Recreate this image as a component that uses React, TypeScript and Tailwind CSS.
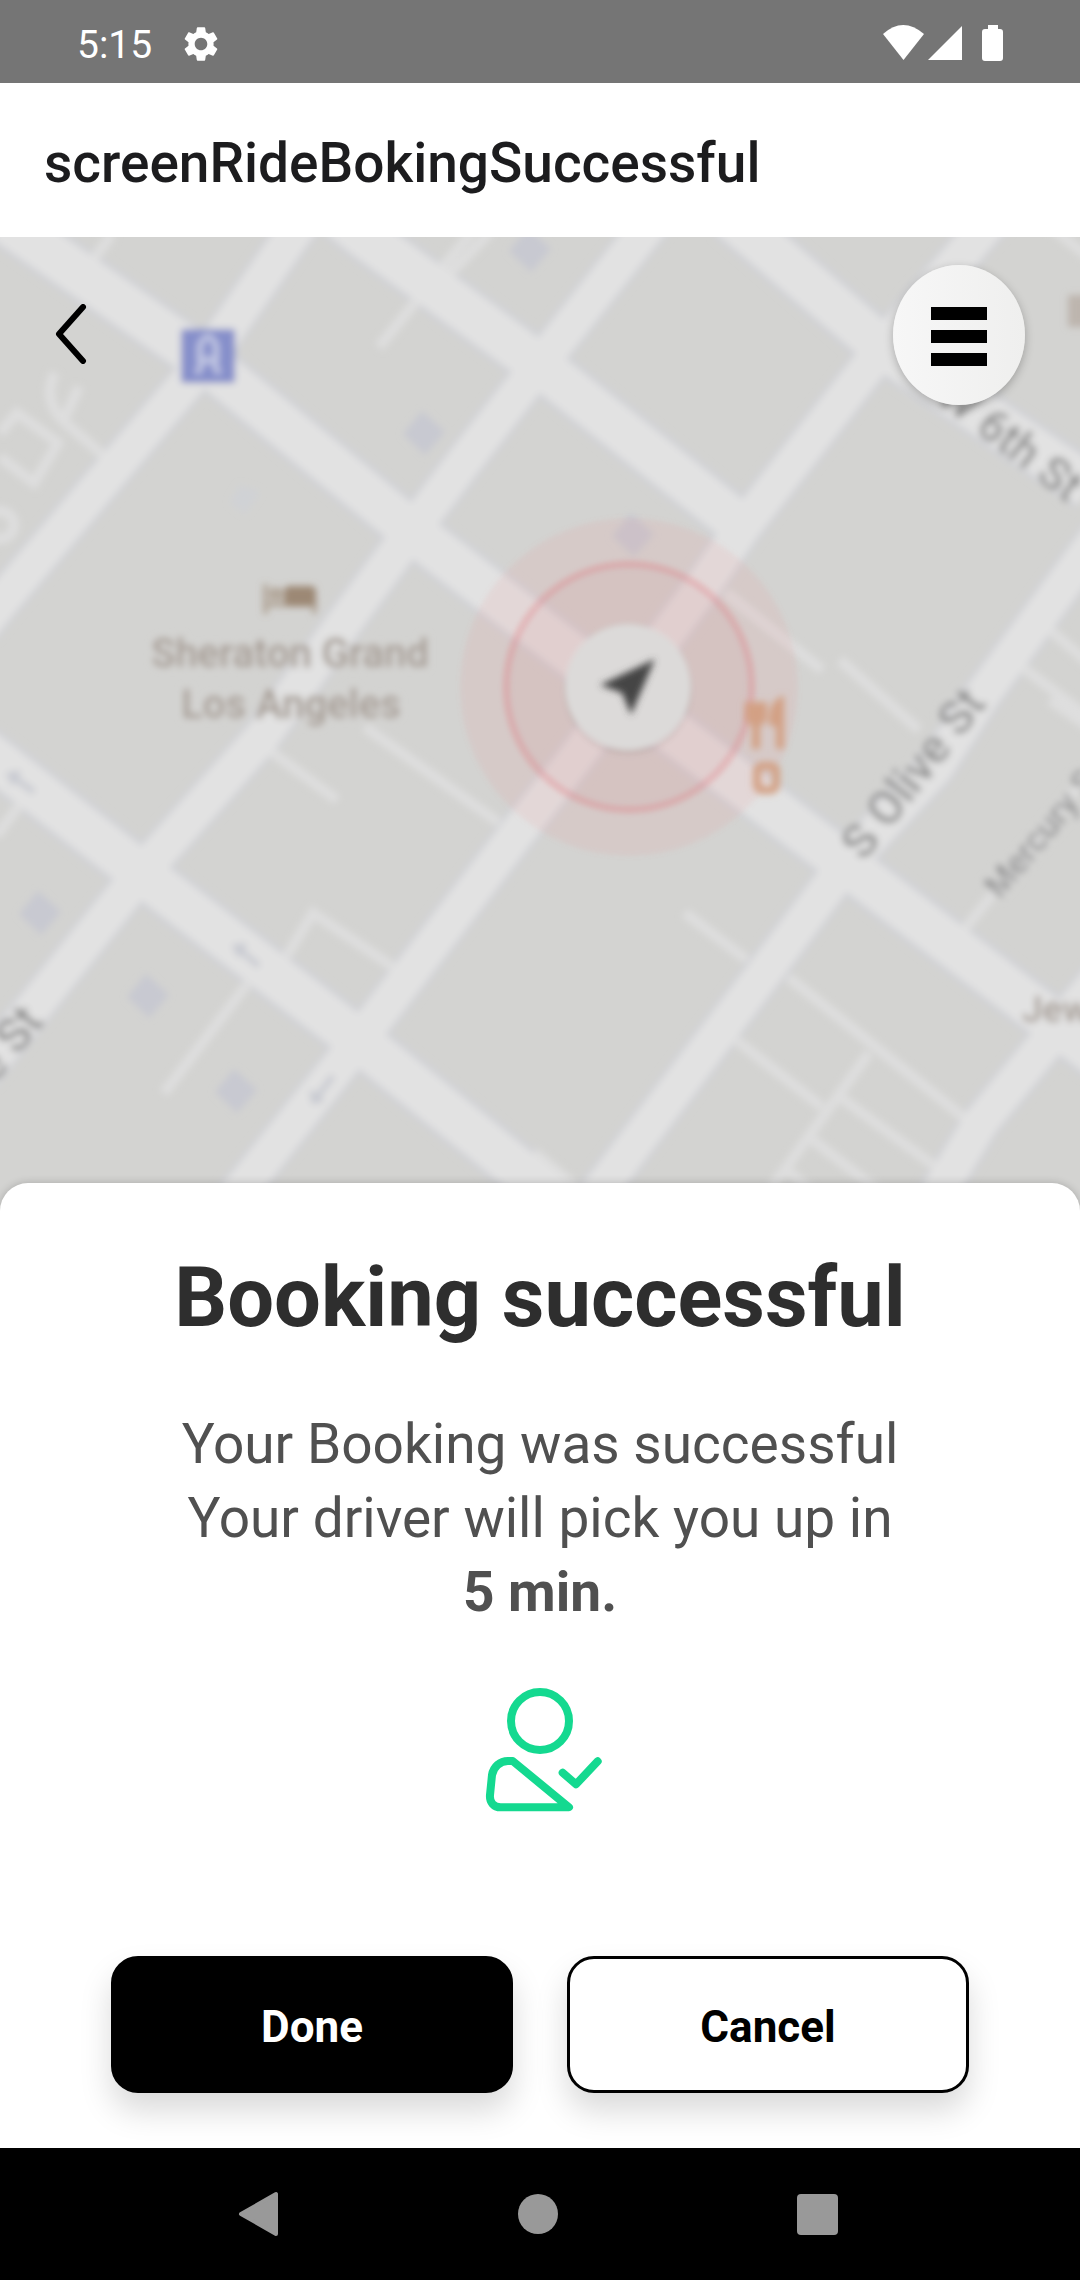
import React from "react";
import { MdSettings } from "react-icons/md";

const AVENUES = [
  "M-20 204 L27 237 L206 362 L412 531 L628 698 L844 863 L1050 1020 L1100 1058",
  "M340 217 L365 237 L538 364 L743 527",
  "M730 217 L754 237 L881 346 L1090 487",
  "M-20 748 L0 763 L141 873 L358 1040 L503 1157 L600 1235",
];

const STREETS = [
  "M306 217 L291 237 L206 360 L115 467 L0 603 L-20 628",
  "M656 217 L640 237 L540 364 L463 463 L411 532 L344 623 L262 737 L141 873 L34 1007 L-20 1075",
  "M1000 210 L977 237 L881 350 L743 527 L705 583 L574 760 L517 833 L358 1042 L220 1216",
  "M1100 535 L1080 562 L981 697 L936 767 L844 866 L764 973 L585 1210",
  "M1100 978 L1046 1043 L981 1122 L925 1215",
];

const LANES = [
  "M112 234 L93 260",
  "M490 232 L444 280 M472 232 L436 275",
  "M417 300 L379 347",
  "M55 373 Q42 397 62 420 L103 455 M79 387 L65 417",
  "M0 433 L17 413 L58 443 L34 483 L0 457",
  "M265 747 L337 800",
  "M365 727 L499 823",
  "M286 957 L313 913 L393 967",
  "M248 983 L164 1093",
  "M21 803 L-4 836",
  "M685 913 L747 960",
  "M788 977 L967 1120",
  "M736 1040 L822 1107",
  "M869 1053 L770 1190",
  "M840 1097 L936 1167",
  "M809 1137 L880 1192",
  "M784 1167 L812 1192",
  "M534 1152 L580 1190",
  "M1090 772 L964 930",
  "M1050 700 L1090 728",
  "M1022 667 L1090 718",
  "M1050 630 L1090 664",
  "M726 593 L822 670",
  "M840 660 L919 730",
  "M1050 226 L1090 258",
];

const STOPS = [
  [424, 433],
  [530, 250],
  [633, 535],
  [40, 913],
  [148, 996],
  [236, 1091],
];

function CityMap() {
  return (
    <svg
      className="absolute inset-0 h-full w-full"
      viewBox="0 237 1080 974"
      preserveAspectRatio="xMidYMin slice"
      role="img"
      aria-label="Map of downtown Los Angeles"
    >
      <defs>
        <filter id="soft" filterUnits="userSpaceOnUse" x="-20" y="217" width="1120" height="1014">
          <feGaussianBlur stdDeviation="3.6" />
        </filter>
        <filter id="edge" filterUnits="userSpaceOnUse" x="400" y="480" width="460" height="420">
          <feGaussianBlur stdDeviation="2.4" />
        </filter>
      </defs>
      <rect x="-20" y="217" width="1120" height="1014" fill="#d3d3d1" />
      <g filter="url(#soft)">
        <g fill="none" stroke="#d0d1d6">
          {AVENUES.map((d) => (
            <path key={d} d={d} strokeWidth="52" />
          ))}
          {STREETS.map((d) => (
            <path key={d} d={d} strokeWidth="42" />
          ))}
        </g>
        <g fill="none" stroke="#dedede" strokeWidth="10">
          {LANES.map((d) => (
            <path key={d} d={d} />
          ))}
          <circle cx="0" cy="525" r="14" />
        </g>
        <g fill="none" stroke="#e2e2e2" strokeLinejoin="round">
          {AVENUES.map((d) => (
            <path key={d} d={d} strokeWidth="43" />
          ))}
          {STREETS.map((d) => (
            <path key={d} d={d} strokeWidth="35" />
          ))}
        </g>
        <path d="M240 485 L260 492 L245 514 L230 502Z" fill="#d0d2d5" />
        {STOPS.map(([x, y]) => (
          <path
            key={x}
            d={`M${x - 2} ${y - 22} L${x + 21} ${y - 1} L${x + 1} ${y + 22} L${x - 21} ${y + 1}Z`}
            fill="#c8c9d1"
          />
        ))}
        <g fill="none" stroke="#c9cbd2" strokeWidth="6">
          <path d="M10 775 L34 792 M14 784 L10 775 L20 773" />
          <path d="M236 947 L259 966 M240 956 L236 947 L246 946" />
          <path d="M314 1101 L333 1076 M312 1091 L314 1101 L323 1099" />
        </g>

        <rect x="181" y="329" width="54" height="54" rx="3" fill="#868fca" />
        <g fill="none" stroke="#c0c5e2" strokeWidth="6">
          <path d="M200 345 Q208 329 216 345 V360 H200Z M203 361 L197 374 M213 361 L219 374" />
        </g>

        <g fill="#9c8875">
          <rect x="284" y="586" width="32" height="20" rx="5" />
          <path d="M263 584 H268 V602 H317 V614 H312 V607 H268 V614 H263Z" opacity=".6" />
          <circle cx="276" cy="594" r="7" opacity=".6" />
        </g>
        <g fill="#a29890" fontFamily="Roboto, sans-serif" fontWeight="500">
          <text x="290" y="667" fontSize="40" textAnchor="middle" stroke="#d6d5d3" strokeWidth="3" paintOrder="stroke">
            Sheraton Grand
          </text>
          <text x="291" y="718" fontSize="40" textAnchor="middle" stroke="#d6d5d3" strokeWidth="3" paintOrder="stroke">
            Los Angeles
          </text>
          <text x="1022" y="1022" fontSize="37">
            Jew
          </text>
          <rect x="1068" y="295" width="24" height="32" fill="#bdb5ae" />
        </g>
        <g fill="#8e8e8e" fontFamily="Roboto, sans-serif" fontWeight="500">
          <text transform="translate(934 399) rotate(38)" fontSize="45" stroke="#dcdcdc" strokeWidth="3" paintOrder="stroke">
            W 6th St
          </text>
          <text transform="translate(864 862) rotate(-52)" fontSize="47" stroke="#dedede" strokeWidth="3" paintOrder="stroke">
            S Olive St
          </text>
          <text transform="translate(1000 900) rotate(-50)" fontSize="34" stroke="#dadada" strokeWidth="3" paintOrder="stroke">
            Mercury S
          </text>
          <text transform="translate(-6 1085) rotate(-51)" fontSize="47" stroke="#dedede" strokeWidth="3" paintOrder="stroke">
            e St
          </text>
        </g>
      </g>

      <g filter="url(#edge)">
        <circle cx="629" cy="687" r="169" fill="#e88a8e" fillOpacity=".12" />
        <circle cx="629" cy="687" r="123" fill="#d07078" fillOpacity=".08" stroke="#e06a70" strokeOpacity=".24" strokeWidth="8" />
        <circle cx="628" cy="692" r="64" fill="#8c6a6c" fillOpacity=".1" />
        <circle cx="628" cy="687" r="62" fill="#dcdad9" />
      </g>
      <g filter="url(#soft)">
        <path d="M655 659 L600 685 L622 693 L631 715Z" fill="#444444" />
        <g fill="none" stroke="#d3a084" strokeWidth="8">
          <path d="M749 702 V716 Q749 722 756 722 Q763 722 763 716 V702 M756 702 V749" />
          <path d="M780 749 V702 Q773 706 773 722 H780" />
          <rect x="757" y="766" width="19" height="24" rx="5" />
        </g>
      </g>
    </svg>
  );
}

function StatusBar() {
  return (
    <div className="flex h-[83px] items-center justify-between bg-[#757575] pt-1 pr-[76px] pl-[77px] text-white">
      <div className="flex items-center gap-7">
        <span className="pt-1 text-[39px] leading-none">5:15</span>
        <MdSettings className="size-[42px]" aria-label="Settings" />
      </div>
      <svg className="h-[37px] w-[122px]" viewBox="882 25 122 37" fill="currentColor" aria-label="Wi-Fi, signal and battery">
        <path d="M883 34 Q903 16 924 34 L903.500 60Z" />
        <path d="M962 26 V60 H928Z" />
        <path d="M988 25 H998 V29 H1000 Q1003 29 1003 32 V58 Q1003 61 1000 61 H985 Q982 61 982 58 V32 Q982 29 985 29 H988Z" />
      </svg>
    </div>
  );
}

function PersonCheck() {
  return (
    <svg
      className="h-[130px] w-[130px]"
      viewBox="105 75 390 390"
      fill="none"
      stroke="#14d990"
      strokeWidth="24"
      strokeLinecap="round"
      strokeLinejoin="round"
      aria-hidden="true"
    >
      <circle cx="300" cy="183" r="87" />
      <path d="M218 303 L387 442 H182 C161 442 148 426 150 405 L156 345 C160 321 180 302 206 303Z" />
      <path d="M368 338 L408 373 L473 304" />
    </svg>
  );
}

export default function App() {
  return (
    <div className="flex min-h-screen flex-col bg-white font-['Roboto',sans-serif]">
      <StatusBar />
      <header className="flex h-[154px] items-center px-11 pt-[6px]">
        <h1 className="text-[55px] leading-[64px] font-medium text-[#1c1c1e]">screenRideBokingSuccessful</h1>
      </header>

      <section className="relative min-h-[600px] flex-1 overflow-hidden">
        <CityMap />
        <div className="relative flex items-start justify-between pt-7 pr-[55px] pl-10">
          <button type="button" aria-label="Back" className="mt-8 flex h-[74px] w-[62px] items-center justify-center">
            <svg className="h-[60px] w-8" viewBox="0 0 32 60" fill="none" stroke="#000" strokeWidth="6" strokeLinecap="round" strokeLinejoin="round" aria-hidden="true">
              <path d="M28 3 L4 30 L28 57" />
            </svg>
          </button>
          <button
            type="button"
            aria-label="Menu"
            className="flex h-[140px] w-[132px] flex-col items-center justify-center gap-[10px] rounded-[50%] bg-linear-to-r from-[#f7f7f7] to-[#efefee] pt-[2px] shadow-[0_3px_10px_rgba(0,0,0,0.25)]"
          >
            <span className="h-[13px] w-14 bg-black" />
            <span className="h-[13px] w-14 bg-black" />
            <span className="h-[13px] w-14 bg-black" />
          </button>
        </div>
      </section>

      <main className="relative -mt-7 flex flex-col items-center rounded-t-[28px] bg-white px-[111px] pt-[67px] pb-[55px] shadow-[0_0_8px_rgba(0,0,0,0.2)]">
        <h2 className="text-center text-[83px] leading-[96px] font-bold text-[#2e2e2e]">Booking successful</h2>
        <p className="mt-[61px] text-center text-[55px] leading-[74px] text-[#505050]">
          Your Booking was successful
          <br />
          Your driver will pick you up in
          <br />
          <strong className="font-bold">5 min.</strong>
        </p>
        <div className="mt-14">
          <PersonCheck />
        </div>
        <div className="mt-[141px] grid w-full grid-cols-2 gap-[54px]">
          <button
            type="button"
            className="h-[137px] rounded-[27px] border-[3px] border-black bg-black pt-1 text-[44px] font-bold text-white shadow-[0_18px_32px_rgba(0,0,0,0.15)]"
          >
            Done
          </button>
          <button
            type="button"
            className="h-[137px] rounded-[27px] border-[3px] border-black bg-white pt-1 text-[44px] font-bold text-black shadow-[0_18px_32px_rgba(0,0,0,0.15)]"
          >
            Cancel
          </button>
        </div>
      </main>

      <nav className="relative flex h-[132px] items-center justify-between bg-black pr-[242px] pl-[238px] text-[#999999]">
        <button type="button" aria-label="Back">
          <svg className="h-[46px] w-10" viewBox="0 0 40 46" fill="currentColor" stroke="currentColor" strokeWidth="4" strokeLinejoin="round" aria-hidden="true">
            <path d="M38 3 V43 L3 23Z" />
          </svg>
        </button>
        <button type="button" aria-label="Home" className="size-10 rounded-full bg-[#999999]" />
        <button type="button" aria-label="Recent apps" className="size-[41px] rounded-[4px] bg-[#999999]" />
      </nav>
    </div>
  );
}
